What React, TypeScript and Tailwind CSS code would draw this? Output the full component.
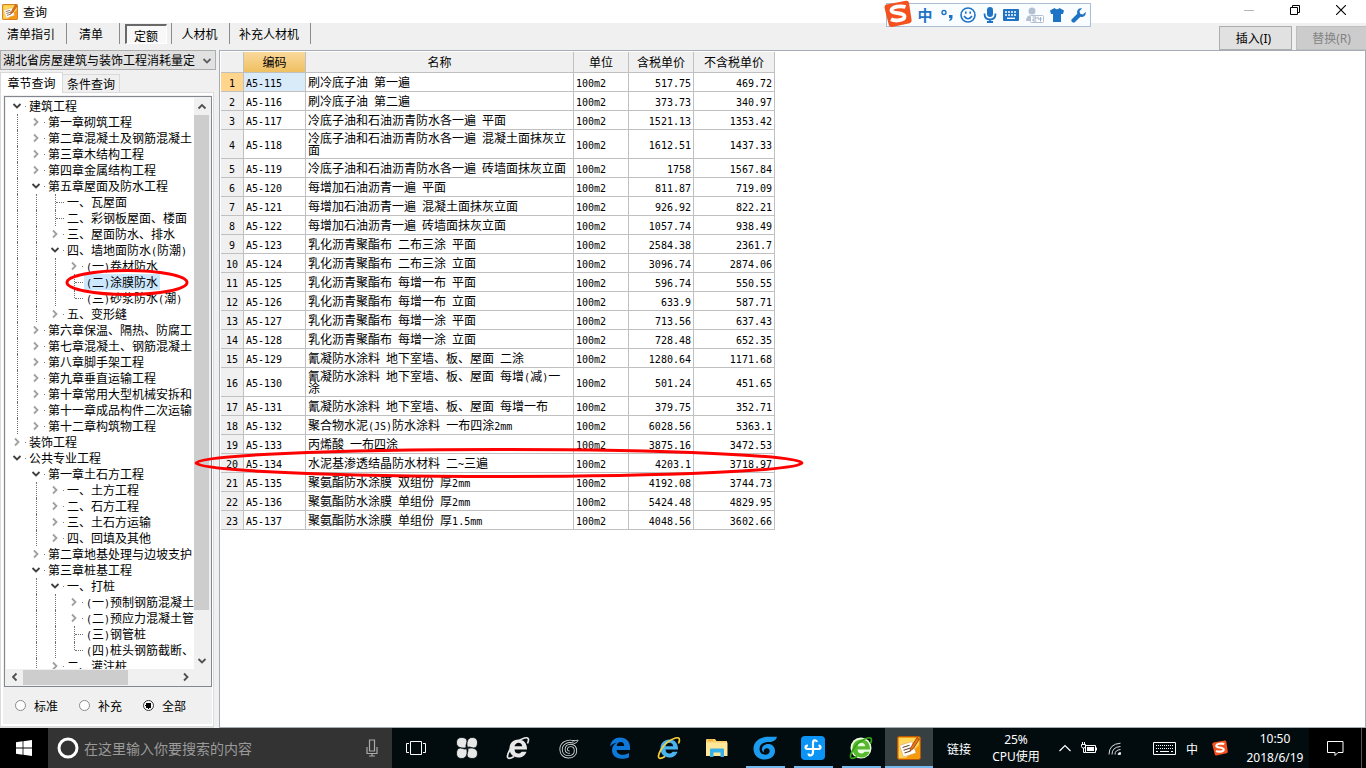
import { Fragment, type ReactNode } from "react";
import clsx from "clsx";

type TreeItem = {
  label: string;
  open?: boolean;
  closed?: boolean;
  selected?: boolean;
  // siblings below this one are not loaded yet, keep the guide line going
  more?: boolean;
  children?: TreeItem[];
};

const tree: TreeItem[] = [
  {
    label: "建筑工程",
    open: true,
    children: [
      { label: "第一章砌筑工程", closed: true },
      { label: "第二章混凝土及钢筋混凝土", closed: true },
      { label: "第三章木结构工程", closed: true },
      { label: "第四章金属结构工程", closed: true },
      {
        label: "第五章屋面及防水工程",
        open: true,
        children: [
          { label: "一、瓦屋面" },
          { label: "二、彩钢板屋面、楼面" },
          { label: "三、屋面防水、排水", closed: true },
          {
            label: "四、墙地面防水(防潮)",
            open: true,
            children: [
              { label: "(一)卷材防水", closed: true },
              { label: "(二)涂膜防水", selected: true },
              { label: "(三)砂浆防水(潮)" },
            ],
          },
          { label: "五、变形缝", closed: true },
        ],
      },
      { label: "第六章保温、隔热、防腐工", closed: true },
      { label: "第七章混凝土、钢筋混凝土", closed: true },
      { label: "第八章脚手架工程", closed: true },
      { label: "第九章垂直运输工程", closed: true },
      { label: "第十章常用大型机械安拆和", closed: true },
      { label: "第十一章成品构件二次运输", closed: true },
      { label: "第十二章构筑物工程", closed: true },
    ],
  },
  { label: "装饰工程", closed: true },
  {
    label: "公共专业工程",
    open: true,
    children: [
      {
        label: "第一章土石方工程",
        open: true,
        children: [
          { label: "一、土方工程", closed: true },
          { label: "二、石方工程", closed: true },
          { label: "三、土石方运输", closed: true },
          { label: "四、回填及其他", closed: true },
        ],
      },
      { label: "第二章地基处理与边坡支护", closed: true },
      {
        label: "第三章桩基工程",
        open: true,
        more: true,
        children: [
          {
            label: "一、打桩",
            open: true,
            children: [
              { label: "(一)预制钢筋混凝土", closed: true },
              { label: "(二)预应力混凝土管", closed: true },
              { label: "(三)钢管桩" },
              { label: "(四)桩头钢筋截断、" },
            ],
          },
          { label: "二、灌注桩", closed: true },
        ],
      },
    ],
  },
];

const rows: [string, string, string, string][] = [
  ["A5-115", "刷冷底子油 第一遍", "517.75", "469.72"],
  ["A5-116", "刷冷底子油 第二遍", "373.73", "340.97"],
  ["A5-117", "冷底子油和石油沥青防水各一遍 平面", "1521.13", "1353.42"],
  ["A5-118", "冷底子油和石油沥青防水各一遍 混凝土面抹灰立面", "1612.51", "1437.33"],
  ["A5-119", "冷底子油和石油沥青防水各一遍 砖墙面抹灰立面", "1758", "1567.84"],
  ["A5-120", "每增加石油沥青一遍 平面", "811.87", "719.09"],
  ["A5-121", "每增加石油沥青一遍 混凝土面抹灰立面", "926.92", "822.21"],
  ["A5-122", "每增加石油沥青一遍 砖墙面抹灰立面", "1057.74", "938.49"],
  ["A5-123", "乳化沥青聚酯布 二布三涂 平面", "2584.38", "2361.7"],
  ["A5-124", "乳化沥青聚酯布 二布三涂 立面", "3096.74", "2874.06"],
  ["A5-125", "乳化沥青聚酯布 每增一布 平面", "596.74", "550.55"],
  ["A5-126", "乳化沥青聚酯布 每增一布 立面", "633.9", "587.71"],
  ["A5-127", "乳化沥青聚酯布 每增一涂 平面", "713.56", "637.43"],
  ["A5-128", "乳化沥青聚酯布 每增一涂 立面", "728.48", "652.35"],
  ["A5-129", "氰凝防水涂料 地下室墙、板、屋面 二涂", "1280.64", "1171.68"],
  ["A5-130", "氰凝防水涂料 地下室墙、板、屋面 每增(减)一涂", "501.24", "451.65"],
  ["A5-131", "氰凝防水涂料 地下室墙、板、屋面 每增一布", "379.75", "352.71"],
  ["A5-132", "聚合物水泥(JS)防水涂料 一布四涂2mm", "6028.56", "5363.1"],
  ["A5-133", "丙烯酸 一布四涂", "3875.16", "3472.53"],
  ["A5-134", "水泥基渗透结晶防水材料 二~三遍", "4203.1", "3718.97"],
  ["A5-135", "聚氨酯防水涂膜 双组份 厚2mm", "4192.08", "3744.73"],
  ["A5-136", "聚氨酯防水涂膜 单组份 厚2mm", "5424.48", "4829.95"],
  ["A5-137", "聚氨酯防水涂膜 单组份 厚1.5mm", "4048.56", "3602.66"],
];

// half-width characters take exactly half of a Chinese character
const Mixed = ({ text }: { text: string }) => (
  <>
    {text.split(/([\x20-\x7e]+)/).map((part, i) =>
      i % 2 ? (
        <span key={i} className="font-['DejaVu_Sans_Mono',monospace] text-[10px] leading-[0px]">
          {part}
        </span>
      ) : (
        <Fragment key={i}>{part}</Fragment>
      ),
    )}
  </>
);

const Chevron = ({ dir, className }: { dir: "up" | "down" | "left" | "right"; className?: string }) => {
  const d = {
    up: "M1.5 6.5 5 3l3.5 3.5",
    down: "M1.5 3 5 6.5 8.5 3",
    left: "M6.5 1.5 3 5l3.5 3.5",
    right: "M3 1.5 6.5 5 3 8.5",
  }[dir];
  return (
    <svg viewBox="0 0 10 10" className={clsx("size-[10px] shrink-0", className)} fill="none" stroke="currentColor" strokeWidth="1.8">
      <path d={d} />
    </svg>
  );
};

const TreeRow = ({ item, guides, last }: { item: TreeItem; guides: boolean[]; last: boolean }) => (
  <>
    <li className="flex h-4 items-center whitespace-nowrap">
      {guides.map((on, i) => (
        <span key={i} className="flex h-4 w-[19px] shrink-0 justify-end">
          {on && <span className="mr-[9px] border-l border-dotted border-[#707070]" />}
        </span>
      ))}
      <span className="flex h-4 w-[19px] shrink-0 items-center">
        {item.open && <Chevron dir="down" className="ml-1 text-[#404040]" />}
        {item.closed && <Chevron dir="right" className="ml-1 text-[#a0a0a0]" />}
        {item.open || item.closed ? (
          <span className="ml-[3px] h-px w-px bg-[#808080]" />
        ) : (
          <span className="flex h-4 w-full items-center pl-[9px]">
            <span className={clsx("border-l border-dotted border-[#707070]", last ? "h-2 self-start" : "h-4")} />
            <span className="w-2 border-t border-dotted border-[#707070]" />
          </span>
        )}
      </span>
      <button className={clsx("h-4 px-0.5 leading-4", item.selected && "bg-[#cce8ff]")}>
        <Mixed text={item.label} />
      </button>
    </li>
    {item.children?.map((child, i) => (
      <TreeRow
        key={child.label}
        item={child}
        guides={[...guides, !last]}
        last={i === item.children!.length - 1 && !child.more}
      />
    ))}
  </>
);

const NoteIcon = ({ className }: { className?: string }) => (
  <svg viewBox="0 0 24 24" className={className}>
    <rect x="0.5" y="0.5" width="23" height="23" rx="2" fill="#f59a0c" stroke="#b8560a" />
    <path d="M2 2h20v7L9 22H2z" fill="#ffd75a" />
    <path d="M2.5 9.500 15 5.500l4 11.500-12.500 4z" fill="#fff" stroke="#d9a25a" strokeWidth=".6" />
    <path d="m5.500 11.500 7-2.200M6.500 14.200l7-2.200M7.500 17l6-2" stroke="#6b4a2a" strokeWidth="1.100" />
    <path d="m13 15 .8-3.500L20 1.500l2.500 1.500-6.500 10z" fill="#e8741a" stroke="#8a3206" strokeWidth=".7" />
  </svg>
);

const SogouLogo = ({ className }: { className?: string }) => (
  <svg viewBox="0 0 28 28" className={className}>
    <path d="M2.500 4.500 22 .8q2.500-.4 3 2L27.600 20q.3 2.500-2 3.200L8 27q-2.600.4-3.200-2L.6 8Q.2 5.200 2.500 4.500z" fill="#f4511e" />
    <path d="M21.500 7C17 5.500 8 6.500 7.500 10.200c-.3 4 13 2 13 6.300 0 4-9 5-13.500 2.800" fill="none" stroke="#fff" strokeWidth="3.800" />
  </svg>
);

const ImeBar = () => (
  <div className="absolute top-[3px] left-[886px] flex h-6 w-[205px] items-center border border-[#a9bdd3] bg-[#fafdff] pl-[30px] text-[#1f73c4]">
    <SogouLogo className="absolute -top-1 -left-[3px] size-7" />
    <div className="flex flex-1 items-center justify-between pr-1">
      <button className="w-4 text-[15px] leading-5 font-bold">中</button>
      <svg viewBox="0 0 14 14" className="size-[14px]">
        <circle cx="4" cy="4.500" r="2" fill="none" stroke="currentColor" strokeWidth="1.400" />
        <path d="M9 7h3.500v2.500q0 2.500-3 3.500l-.5-1q1.500-.7 1.500-2H9z" fill="currentColor" />
      </svg>
      <svg viewBox="0 0 16 16" className="size-4" fill="none" stroke="currentColor" strokeWidth="1.600">
        <circle cx="8" cy="8" r="7" />
        <path d="M4 9q4 5.500 8 0M5.800 4.500v2.300M10.200 4.500v2.300" />
      </svg>
      <svg viewBox="0 0 14 16" className="h-4 w-[14px]">
        <rect x="4" y="0" width="6" height="10" rx="3" fill="currentColor" />
        <path d="M1.500 6.500q0 6 5.500 6t5.500-6M7 12v3.500M4 15h6" fill="none" stroke="currentColor" strokeWidth="1.800" />
      </svg>
      <svg viewBox="0 0 16 12" className="h-3 w-4">
        <rect width="16" height="12" rx="1" fill="currentColor" />
        <path d="M2 3h12M2 6h12" stroke="#fff" strokeWidth="1.500" strokeDasharray="2 1" />
        <path d="M4 9.300h8" stroke="#fff" strokeWidth="1.400" />
      </svg>
      <svg viewBox="0 0 18 16" className="h-4 w-[18px]">
        <circle cx="6" cy="4" r="3.500" fill="#b3bfd3" />
        <path d="M0 14q0-6 6-6t6 6z" fill="#b3bfd3" />
        <rect x="4.500" y="8.500" width="13" height="7" rx="1" fill="#fff" stroke="#b3bfd3" />
        <path d="M6.500 10h3.500v2H7v2h3.500M12 9.500V12h4M14.500 10v4.500" fill="none" stroke="#9fafc9" />
      </svg>
      <svg viewBox="0 0 14 14" className="size-[14px]">
        <path d="M4.500 0Q7 2.500 9.500 0L14 2.500 13 6h-2v8H3V6H1L0 2.500z" fill="currentColor" />
      </svg>
      <svg viewBox="0 0 16 16" className="size-[15px]">
        <path d="M15.500 4.200 12.700 7 9.800 6.200 9 3.300 11.800.5Q9.500-.3 7.500 1.700 6 3.500 6.700 6L.8 12q-1 1.200 0 2.400l.8.800q1.200 1 2.400 0L10 9.300q2.500.7 4.300-.8 2-2 1.200-4.300z" fill="currentColor" />
      </svg>
    </div>
  </div>
);

const TitleBar = () => (
  <header className="flex h-[23px] shrink-0 items-center bg-white">
    <NoteIcon className="ml-0.5 size-4" />
    <h1 className="ml-[5px] flex-1 text-xs leading-4">查询</h1>
    <div className="mr-0.5 flex h-5 items-center self-start">
      <button aria-label="最小化" className="flex w-[46px] justify-center">
        <span className="h-px w-[10px] bg-[#b5b5b5]" />
      </button>
      <button aria-label="还原" className="flex w-[46px] justify-center">
        <svg viewBox="0 0 10 10" className="size-[10px]" fill="none" stroke="#000">
          <path d="M.5 2.500h7v7h-7zM2.500 2.500v-2h7v7h-2" />
        </svg>
      </button>
      <button aria-label="关闭" className="flex w-[46px] justify-center">
        <svg viewBox="0 0 10 10" className="size-[10px]" stroke="#000" strokeWidth="1.100">
          <path d="m0 0 10 10M10 0 0 10" />
        </svg>
      </button>
    </div>
  </header>
);

const toolbarTabs = [
  { label: "清单指引", width: "w-[67px] pr-1" },
  { label: "清单", width: "w-[53px] pr-1" },
  { label: "定额", width: "w-[52px]", active: true },
  { label: "人材机", width: "w-[58px] pr-0.5" },
  { label: "补充人材机", width: "w-[81px] pr-0.5" },
];

const Toolbar = () => (
  <nav className="flex h-[27px] shrink-0 bg-[#f0f0f0]">
    {toolbarTabs.map((tab) => (
      <div key={tab.label} className={clsx("flex h-[21px] items-center justify-center border-r border-[#8c8c8c]", tab.width)}>
        <button
          className={clsx(
            "h-5 leading-5",
            tab.active && "w-[42px] border border-t-2 border-l-2 border-[#fff] border-t-[#696969] border-l-[#696969] bg-[#f8f8f8] leading-4",
          )}
        >
          {tab.label}
        </button>
      </div>
    ))}
    <div className="ml-auto flex gap-1 pt-[3px]">
      <button className="h-6 w-[73px] border border-[#adadad] bg-[#e1e1e1] pr-1">
        插入<span className="font-['Noto_Sans',sans-serif]">(I)</span>
      </button>
      <button disabled className="h-6 w-[70px] border border-r-0 border-[#bfbfbf] bg-[#ccc] text-[#838383]">
        替换<span className="font-['Noto_Sans',sans-serif]">(R)</span>
      </button>
    </div>
  </nav>
);

const Sidebar = () => (
  <aside className="flex w-[219px] shrink-0 flex-col bg-[#f0f0f0] pr-[3px]">
    <div className="relative">
      <select aria-label="定额库" className="block h-5 w-full appearance-none border border-[#adadad] bg-[#e1e1e1] pl-0.5 text-xs leading-4">
        <option>湖北省房屋建筑与装饰工程消耗量定</option>
      </select>
      <Chevron dir="down" className="pointer-events-none absolute top-[6px] right-1 text-[#606060]" />
    </div>
    <div className="flex items-end pt-0.5">
      <button className="z-10 -mb-px h-[21px] w-[63px] border border-b-0 border-[#d9d9d9] bg-white">章节查询</button>
      <button className="h-[18px] w-[57px] border border-b-0 border-l-0 border-[#d9d9d9]">条件查询</button>
    </div>
    <div className="mr-0.5 flex min-h-0 flex-1 flex-col border border-b-2 border-[#dcdcdc] bg-white py-[2px] pr-px pl-[2px]">
      <div className="flex min-h-0 flex-1 flex-col bg-[#f0f0f0] pl-px">
        <div className="mt-px grid min-h-0 flex-1 grid-cols-[minmax(0,1fr)_16px] grid-rows-[minmax(0,1fr)_16px] border border-[#828790] bg-[#f0f0f0] p-px">
          <ul className="overflow-hidden bg-white pl-[2px]">
            {tree.map((item, i) => (
              <TreeRow key={item.label} item={item} guides={[]} last={i === tree.length - 1} />
            ))}
          </ul>
          <div className="flex flex-col items-center">
            <button aria-label="向上" className="flex h-[17px] items-center">
              <Chevron dir="up" className="text-[#505050]" />
            </button>
            <div className="min-h-0 w-[15px] flex-[494] self-start bg-[#cdcdcd]" />
            <div className="min-h-0 flex-[42]" />
            <button aria-label="向下" className="flex h-[17px] items-center">
              <Chevron dir="down" className="text-[#505050]" />
            </button>
          </div>
          <div className="flex items-center">
            <button aria-label="向左" className="flex w-[17px] justify-center">
              <Chevron dir="left" className="text-[#505050]" />
            </button>
            <div className="h-[15px] flex-[105] bg-[#cdcdcd]" />
            <div className="flex-[49]" />
            <button aria-label="向右" className="flex w-[17px] justify-center">
              <Chevron dir="right" className="text-[#505050]" />
            </button>
          </div>
        </div>
        <div className="flex h-[37px] shrink-0 items-center pl-[11px]">
          {["标准", "补充", "全部"].map((label) => (
            <label key={label} className="flex w-16 items-center gap-2">
              <input
                type="radio"
                name="scope"
                defaultChecked={label === "全部"}
                className="size-[11px] shrink-0 appearance-none rounded-full border border-[#8a8a8a] bg-white checked:border-[#333] checked:bg-[radial-gradient(circle,#000_0_3px,#fff_3px)]"
              />
              {label}
            </label>
          ))}
        </div>
      </div>
    </div>
  </aside>
);

const QuotaTable = () => (
  <main className="min-w-0 flex-1 overflow-hidden border border-[#a5acb5] bg-white pt-px pl-px">
    <table className="w-[554px] table-fixed border-separate border-spacing-0 text-xs leading-3">
      <colgroup>
        <col className="w-[23px]" />
        <col className="w-[62px]" />
        <col className="w-[268px]" />
        <col className="w-[55px]" />
        <col className="w-[65px]" />
        <col className="w-[81px]" />
      </colgroup>
      <thead>
        <tr className="h-[21px]">
          {["", "编码", "名称", "单位", "含税单价", "不含税单价"].map((head) => (
            <th
              key={head}
              className={clsx(
                "border-r border-b border-[#c0c0c0] p-0 font-normal",
                head === "编码" ? "bg-linear-to-b from-[#f9d99b] to-[#f0c060]" : "bg-[#f0f0f0]",
              )}
            >
              {head}
            </th>
          ))}
        </tr>
      </thead>
      <tbody className="[&_td]:border-r [&_td]:border-b [&_td]:border-[#c0c0c0] [&_td]:px-0.5 [&_td]:py-0">
        {rows.map(([code, name, price, net], i) => (
          <tr key={code} className={name.length > 22 ? "h-[29px]" : "h-[19px]"}>
            <td className={clsx("text-center", i === 0 ? "bg-[#ffd58d]" : "bg-[#f0f0f0]")}>
              <Mixed text={String(i + 1)} />
            </td>
            <td className={clsx(i === 0 && "bg-[#d9eaf9]")}>
              <Mixed text={code} />
            </td>
            <td>
              <Mixed text={name} />
            </td>
            <td>
              <Mixed text="100m2" />
            </td>
            <td className="text-right">
              <Mixed text={price} />
            </td>
            <td className="text-right">
              <Mixed text={net} />
            </td>
          </tr>
        ))}
      </tbody>
    </table>
  </main>
);

const swirl = "M18.500 4.500C10 2 3.500 6.500 3.500 13c0 5 3.500 8.500 8.500 8.500s8-3 8-7-2.500-6-5.500-6-5 2-5 4.500 2 3.500 4 3";

const IeIcon = ({ color, ring, back }: { color: string; ring: string; back?: boolean }) => (
  <svg viewBox="0 0 24 24" className="size-6">
    {back && <circle cx="12" cy="12" r="10.500" fill="#e9ffe0" />}
    <path
      d="M21 13.500H8.500c.3 3 2 4 3.800 4 1.500 0 2.600-.6 3.200-1.800h5c-1.200 3.600-4.300 5.800-8.200 5.800-5.200 0-8.800-3.700-8.800-9s3.700-9 8.800-9c5.500 0 9 4 8.700 10zM16.200 10.200c-.2-2.200-1.600-3.500-3.800-3.500s-3.500 1.300-3.900 3.500z"
      fill={color}
      fillRule="evenodd"
    />
    <path d="M21.500 7.500Q24.500.5 18.500 2 10 4.500 4 13.500-.5 22 3 22.300 5 22.300 8 20.500" fill="none" stroke={ring} strokeWidth="1.700" />
  </svg>
);

const taskIcons: { name: string; icon: ReactNode; running?: boolean; active?: boolean }[] = [
  {
    name: "浏览器",
    icon: (
      <svg viewBox="0 0 22 22" className="size-[22px]" fill="#e8e8e8" stroke="#020c0f" strokeWidth=".8">
        <path d="M10.500 10.500C6 12 .5 10.500.5 6S3 .5 6 .5 11 2 11 4.500 9 8.500 10.500 10.500z" />
        <path d="M11.500 10.500C10 6 11.500.5 16 .5S21.500 3 21.500 6 20 11 17.500 11 13.500 9 11.500 10.500z" />
        <path d="M11.500 11.500c4.500-1.500 10 0 10 4.500s-2.500 5.500-5.500 5.500-5-1.500-5-4 2-4 .5-6z" />
        <path d="M10.500 11.500c1.500 4.500 0 10-4.500 10S.5 19 .5 16 2 11 4.500 11s4 2 6 .5z" />
      </svg>
    ),
  },
  { name: "网页", icon: <IeIcon color="#e8e8e8" ring="#e8e8e8" /> },
  {
    name: "广联达",
    icon: (
      <svg viewBox="0 0 24 24" className="size-[21px]" fill="none">
        <path d={swirl} stroke="#d8d8d8" strokeWidth="3.800" />
        <path d={swirl} stroke="#020c0f" strokeWidth="1.800" />
        <path d="m16 3.500 7-1Q22 6 18 6.500" stroke="#d8d8d8" />
      </svg>
    ),
  },
  {
    name: "Edge",
    icon: (
      <svg viewBox="0 0 22 22" className="size-[22px]" fill="#0d78d7">
        <path d="M1 9.500C2 3.500 6 .5 11 .5c6 0 10 4 10 9.500v3H7.500c.3 3.200 3 4.800 6 4.800 2.500 0 4.500-.6 6.500-1.800v4.300c-2 1-4.500 1.500-7.500 1.500-6 0-9.500-3.800-9.500-8.500 0-3.500 1.800-6 4.800-7.500C5 6.500 2.500 7.500 1 9.500zM7.700 9h7.500c0-2.600-1.300-4-3.500-4-2.300 0-3.700 1.600-4 4z" />
      </svg>
    ),
  },
  { name: "Internet Explorer", icon: <IeIcon color="#4ab4ef" ring="#f7cf3a" /> },
  {
    name: "文件资源管理器",
    icon: (
      <svg viewBox="0 0 22 20" className="h-5 w-[22px]">
        <path d="M0 2q0-1 1-1h8l1.500 2H21v15H0z" fill="#f7cf6a" />
        <path d="M0 4.500h21.500V18H0z" fill="#ffe79a" />
        <path d="M2 2.200h5" stroke="#f09a1a" />
        <path d="M4 19v-7.500q0-1 1-1h12q1 0 1 1V19h-3.500v-4.500h-7V19z" fill="#35b0e8" />
      </svg>
    ),
  },
  {
    name: "计价软件",
    running: true,
    icon: (
      <svg viewBox="0 0 24 24" className="size-6">
        <path
          d="M24 .8C18 1 15 .3 11 1.200 4.500 2.500.5 7 .5 13S5 23.500 12 23.500c6 0 10-4 10-8.500 0-4.300-3-7-6.800-7-3.700 0-6.200 2.400-6.200 5.300 0 1.400.6 2.500 1.600 3.200-.1-2.700 1.300-4.300 3.300-4.300 1.700 0 2.800 1.200 2.800 2.800 0 2.200-1.900 3.700-4.500 3.700-3.500 0-5.700-2.400-5.700-5.700C6.500 8.500 10.500 6 16 6c4 0 7-1.500 8-5.200z"
          fill="#1c9cf0"
        />
      </svg>
    ),
  },
  {
    name: "云助手",
    running: true,
    icon: (
      <svg viewBox="0 0 24 24" className="size-6" fill="none">
        <rect width="24" height="24" rx="4" fill="#0b93f6" />
        <path d="M16 6Q15.500 4 13.500 4.300 12 4.500 12 7v9q0 3-2.500 3.500Q7.500 19.500 7.500 17.500M7 9.500q-2.500 0-2.500 1.700T7 13h10.500q2 0 2-1.700T17.500 9.500" stroke="#fff" strokeWidth="2.200" />
      </svg>
    ),
  },
  { name: "360浏览器", running: true, icon: <IeIcon color="#58b82e" ring="#35a314" back /> },
  { name: "查询", running: true, active: true, icon: <NoteIcon className="size-6" /> },
];

const Taskbar = () => (
  <footer className="flex h-10 shrink-0 bg-[#020c0f] text-white">
    <button aria-label="开始" className="flex w-12 items-center justify-center bg-black">
      <svg viewBox="0 0 16 16" className="size-4" fill="#fff">
        <path d="M0 2.200 6.600 1.300V7.600H0zM7.400 1.200 16 0v7.600H7.400zM0 8.400h6.600v6.300L0 13.800zM7.400 8.400H16V16l-8.600-1.200z" />
      </svg>
    </button>
    <div className="flex w-[344px] items-center bg-[#333] pr-3 pl-[9px]">
      <svg viewBox="0 0 22 22" className="size-[22px] shrink-0" fill="none">
        <circle cx="11" cy="11" r="9" stroke="#fff" strokeWidth="3" />
      </svg>
      <input
        aria-label="搜索"
        placeholder="在这里输入你要搜索的内容"
        className="ml-[5px] min-w-0 flex-1 bg-transparent text-sm leading-5 placeholder:text-[#9a9a9a]"
      />
      <svg viewBox="0 0 16 18" className="h-[18px] w-4" fill="none" stroke="#aaa" strokeWidth="1.200">
        <path d="M5.500 1h5v11h-5zM3 8v6.500h10V8M8 14.500V17M5 17h6" />
      </svg>
    </div>
    <button aria-label="任务视图" className="flex w-12 items-center justify-center">
      <svg viewBox="0 0 20 14" className="h-[14px] w-5" fill="none" stroke="#fff">
        <path d="M4.500.5h11v13h-11zM3 2.500H.5v9H3M17 2.500h2.500v9H17" />
      </svg>
    </button>
    <div className="ml-px flex">
      {taskIcons.map((task, i) => (
        <button
          key={task.name}
          aria-label={task.name}
          className={clsx(
            "flex flex-col items-center",
            i < 4 ? "w-[51px]" : "w-12",
            task.active && "bg-[#363f42]",
          )}
        >
          <span className="flex flex-1 items-center pt-0.5">{task.icon}</span>
          <span className={clsx("h-0.5", task.active ? "w-full" : "w-[39px]", task.running && "bg-[#76b9ed]")} />
        </button>
      ))}
    </div>
    <div className="ml-auto flex items-center text-xs leading-[17px]">
      <span>链接</span>
      <div className="ml-5 w-[50px] text-center font-['Noto_Sans','Noto_Sans_CJK_SC',sans-serif]">
        25%
        <br />
        CPU使用
      </div>
      <svg viewBox="0 0 12 8" className="ml-[18px] h-2 w-3" fill="none" stroke="#fff" strokeWidth="1.200">
        <path d="m.5 7 5.500-5.500L11.500 7" />
      </svg>
      <svg viewBox="0 0 16 12" className="ml-[10px] h-3 w-4" fill="none" stroke="#fff">
        <path d="M4.500 3.500h10v7h-10zM15.500 5.500v3M.5 2.500h4v2q0 1.500-2 1.500t-2-1.500zM1.500 0v2.500M3.500 0v2.500M2.500 6v4.500h2" />
        <path d="M6 5h7v4H6z" fill="#fff" stroke="none" />
      </svg>
      <svg viewBox="0 0 13 13" className="ml-[11px] size-[13px]" fill="none" stroke="#ddd">
        <path d="M1 12.500Q1 2 12.500 1.200M4 12.500q0-7.500 8.500-8M7 12.500q0-4.500 5.500-5" />
        <path d="M10 12.500q0-2 2.500-2v2z" fill="#fff" />
      </svg>
      <svg viewBox="0 0 24 13" className="ml-[32px] h-[13px] w-6" fill="none" stroke="#fff">
        <path d="M.5.500h22v12H.5z" />
        <path d="M3 3.500h18M3 6.500h18" strokeDasharray="1 1" />
        <path d="M3 9.500h2M7 9.500h9M18 9.500h2" />
      </svg>
      <button className="ml-[9px]">中</button>
      <SogouLogo className="ml-[14px] size-4" />
      <div className="ml-[14px] w-[66px] text-center font-['Noto_Sans',sans-serif] leading-[19px]">
        10:50
        <br />
        2018/6/19
      </div>
      <button aria-label="通知" className="ml-px flex h-10 w-[52px] items-center justify-center bg-black">
        <svg viewBox="0 0 17 17" className="size-[17px]" fill="none" stroke="#fff">
          <path d="M.5 1.500h15.500v11h-5L8 15.500v-3H.5z" />
        </svg>
      </button>
      <div className="h-10 w-[5px] border-l border-[#555] bg-black" />
    </div>
  </footer>
);

const App = () => (
  <div className="relative flex h-screen flex-col overflow-hidden bg-[#f0f0f0] font-['Noto_Sans_CJK_SC',sans-serif] text-xs text-black">
    <TitleBar />
    <Toolbar />
    <div className="flex min-h-0 flex-1">
      <Sidebar />
      <QuotaTable />
    </div>
    <Taskbar />
    <ImeBar />
    {/* red pen marks */}
    <svg className="pointer-events-none absolute top-[269px] left-[65px] h-[27px] w-[124px]" fill="none" stroke="#f00" strokeWidth="3">
      <ellipse cx="62" cy="13.500" rx="60" ry="12" />
    </svg>
    <svg className="pointer-events-none absolute top-[448px] left-[193px] h-[31px] w-[612px]" fill="none" stroke="#f00" strokeWidth="3">
      <ellipse cx="306" cy="15" rx="303" ry="13.500" />
    </svg>
  </div>
);

export default App;
